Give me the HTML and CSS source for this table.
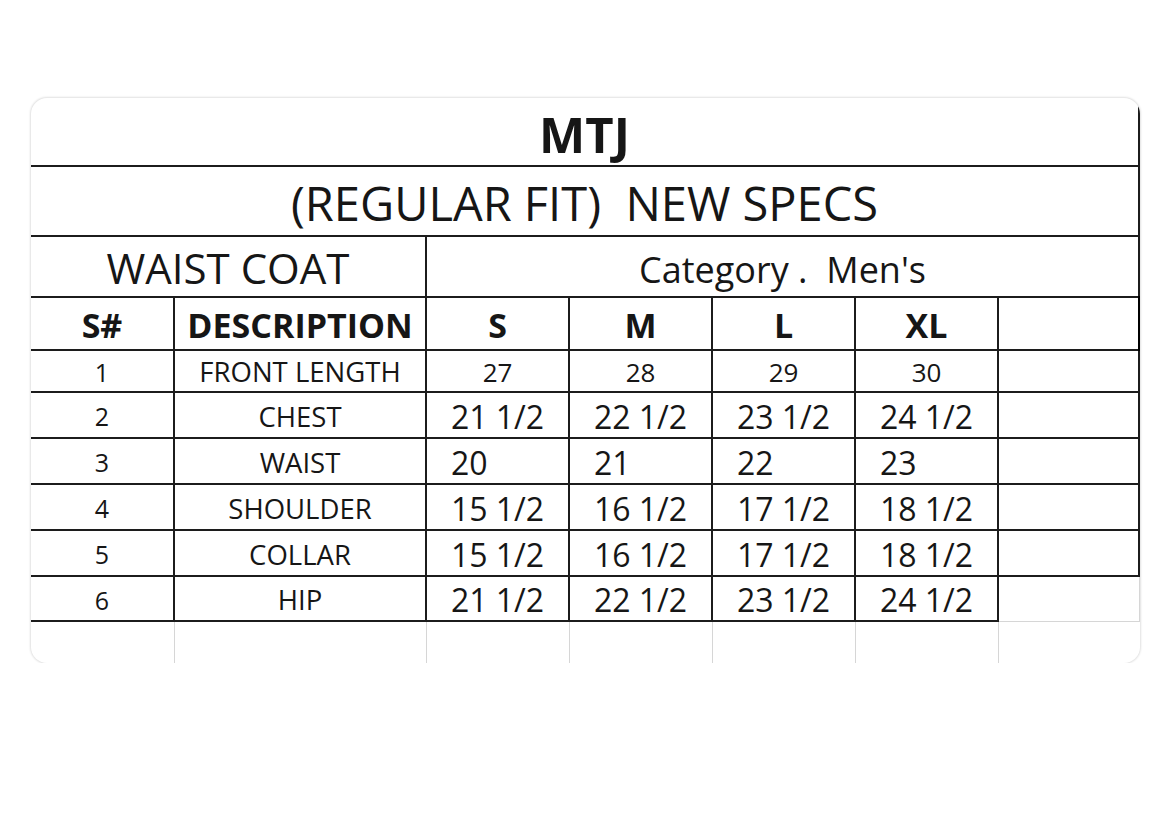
FILE: index.html
```html
<!DOCTYPE html>
<html>
<head>
<meta charset="utf-8">
<link rel="stylesheet" href="styles.css">
</head>
<body>
<div class="card">
  <table class="sheet">
    <colgroup>
      <col class="c-sn"><col class="c-desc"><col class="c-size"><col class="c-size"><col class="c-size"><col class="c-size"><col class="c-extra">
    </colgroup>
    <tr class="r-title"><td colspan="7" class="title">MTJ</td></tr>
    <tr class="r-sub"><td colspan="7" class="subtitle">(REGULAR FIT)&nbsp; NEW SPECS</td></tr>
    <tr class="r-cat"><td colspan="2" class="cat">WAIST COAT</td><td colspan="5" class="cat cat-right">Category .&nbsp; Men's</td></tr>
    <tr class="r-head">
      <td class="head">S#</td><td class="head">DESCRIPTION</td><td class="head">S</td><td class="head">M</td><td class="head">L</td><td class="head">XL</td><td class="head edge-thick"></td>
    </tr>
    <tr class="r-data r-first">
      <td class="num">1</td><td class="desc">FRONT LENGTH</td><td class="val small">27</td><td class="val small">28</td><td class="val small">29</td><td class="val small">30</td><td class="edge"></td>
    </tr>
    <tr class="r-data">
      <td class="num">2</td><td class="desc">CHEST</td><td class="val">21 1/2</td><td class="val">22 1/2</td><td class="val">23 1/2</td><td class="val">24 1/2</td><td class="edge"></td>
    </tr>
    <tr class="r-data">
      <td class="num">3</td><td class="desc">WAIST</td><td class="val left">20</td><td class="val left">21</td><td class="val left">22</td><td class="val left">23</td><td class="edge"></td>
    </tr>
    <tr class="r-data">
      <td class="num">4</td><td class="desc">SHOULDER</td><td class="val">15 1/2</td><td class="val">16 1/2</td><td class="val">17 1/2</td><td class="val">18 1/2</td><td class="edge"></td>
    </tr>
    <tr class="r-data">
      <td class="num">5</td><td class="desc">COLLAR</td><td class="val">15 1/2</td><td class="val">16 1/2</td><td class="val">17 1/2</td><td class="val">18 1/2</td><td class="edge"></td>
    </tr>
    <tr class="r-data r-last">
      <td class="num">6</td><td class="desc">HIP</td><td class="val">21 1/2</td><td class="val">22 1/2</td><td class="val">23 1/2</td><td class="val">24 1/2</td><td class="loose"></td>
    </tr>
    <tr class="r-empty">
      <td></td><td></td><td></td><td></td><td></td><td></td><td></td>
    </tr>
  </table>
</div>
</body>
</html>
```

FILE: styles.css
```css
html, body {
  margin: 0;
  padding: 0;
  background: #ffffff;
}

body {
  font-family: "Open Sans", "Noto Sans", sans-serif;
  color: #161616;
}

.card {
  margin: 98px 0 0 31px;
  width: 1109px;
  height: 565px;
  border-radius: 16px;
  overflow: hidden;
  background: #fff;
  box-shadow: 0 0 2px 1px rgba(0, 0, 0, 0.12);
}

.sheet {
  border-collapse: collapse;
  table-layout: fixed;
  width: 1108px;
}

.c-sn { width: 143px; }
.c-desc { width: 252px; }
.c-size { width: 143px; }
.c-extra { width: 141px; }

.sheet td {
  padding: 0;
  text-align: center;
  vertical-align: middle;
  line-height: 1;
  white-space: nowrap;
  border: 2px solid #1c1c1c;
}

.sheet tr > td:first-child { border-left: none; }

.r-title td { border-top: none; height: 61px; padding-top: 6px; }
.r-sub td { height: 64px; padding-top: 4px; }
.r-cat td { height: 57px; padding-top: 2px; }
.r-cat td.cat-right { height: 53px; padding-top: 6px; }
.r-head td { height: 49px; padding-top: 2px; }
.r-data td { height: 41px; padding-top: 3px; }
.r-first td { height: 38px; padding-top: 2px; }
.r-last td { height: 40px; }
.r-empty td { height: 42px; border: 1px solid #d6d6d6; border-bottom: none; }
.r-empty td:last-child { border-right: none; }

.title {
  font-weight: 700;
  font-size: 49px;
}

.subtitle {
  font-size: 47px;
}

.cat {
  font-size: 42px;
}

.cat-right {
  font-size: 36px;
}

.head {
  font-weight: 700;
  font-size: 34px;
}

.edge-thick { border-right: 3px solid #000 !important; }

.num { font-size: 25px; }
.desc { font-size: 27.5px; }
.val { font-size: 32px; }
.val.small { font-size: 26px; }
.sheet td.val.left { text-align: left; padding-left: 24px; }

.loose {
  border-right: 1px solid #d6d6d6 !important;
  border-bottom: 1px solid #d6d6d6 !important;
}
```
